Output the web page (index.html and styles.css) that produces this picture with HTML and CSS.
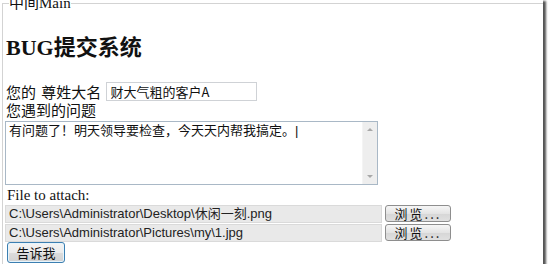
FILE: index.html
```html
<!DOCTYPE html>
<html lang="zh-CN">
<head>
    <meta charset="UTF-8">
    <title>BUG提交系统</title>
    <link rel="stylesheet" href="styles.css">
</head>
<body>
    <!-- screenshot frame with drop shadow -->
    <div class="shot">
        <form class="bug-form">
            <fieldset class="box">
                <legend class="box-title">中间Main</legend>

                <h2 class="title">BUG提交系统</h2>

                <!-- name row -->
                <div class="name-row">
                    <label class="label" for="name">您的 尊姓大名</label>
                    <input class="name-input" id="name" type="text" value="财大气粗的客户A" spellcheck="false">
                </div>

                <div class="label line">您遇到的问题</div>
                <div class="ta-box">
                    <textarea class="ta" spellcheck="false">有问题了！明天领导要检查，今天天内帮我搞定。|</textarea>
                    <!-- fake scrollbar like the old windows one -->
                    <div class="sbar">
                        <span class="arrow up"></span>
                        <span class="arrow down"></span>
                    </div>
                </div>

                <div class="file-label">File to attach:</div>
                <div class="file-row">
                    <div class="file-path">C:\Users\Administrator\Desktop\休闲一刻.png</div>
                    <button type="button" class="browse">浏览...</button>
                </div>
                <div class="file-row">
                    <div class="file-path">C:\Users\Administrator\Pictures\my\1.jpg</div>
                    <button type="button" class="browse">浏览...</button>
                </div>

                <button type="button" class="submit">告诉我</button>
            </fieldset>
        </form>
    </div>
</body>
</html>
```

FILE: styles.css
```css
/* page */
body {
    margin: 0;
    background: #fff;
    font-family: "Liberation Serif", "Noto Sans CJK SC", serif;
    font-size: 15px;
    color: #111;
}

/* the screenshot itself, with the shadow on right and bottom */
.shot {
    width: 543px;
    height: 264px;
    overflow: hidden;
    background: #fff;
    box-shadow: 2px 2px 2px 1px #555;
}

.bug-form {
    margin: 0;
}

/* fieldset is wider and taller than the shot, only left + top border show */
.box {
    margin: -4px 0 0 2px;
    padding: 0 0 0 2px;
    width: 600px;
    height: 320px;
    border: 1px solid #d3d3d3;
    min-width: 0;
}

.box-title {
    margin-left: 4px;
    padding: 0;
    height: 15px;
    line-height: 15px;
    font-size: 15px;
}

.title {
    margin: 24px 0 0 1px;
    height: 25px;
    font-size: 22px;
    line-height: 25px;
    font-weight: bold;
}

.name-row {
    display: flex;
    align-items: center;
    gap: 5px;
    height: 19px;
    margin-top: 22px;
}

.label {
    font-family: "Noto Sans CJK SC", sans-serif;
    font-size: 15px;
    line-height: 19px;
    word-spacing: 2px;
    padding-left: 1px;
}

.line {
    height: 18px;
    line-height: 18px;
}

.name-input {
    box-sizing: border-box;
    width: 151px;
    height: 19px;
    margin: 0;
    padding: 0 3px;
    border: 1px solid #cfd2d6;
    font-family: "Noto Sans CJK SC", sans-serif;
    font-size: 13px;
    color: #111;
    background: #fff;
}

/* textarea with a drawn scrollbar */
.ta-box {
    display: flex;
    box-sizing: border-box;
    width: 373px;
    height: 64px;
    margin-top: 2px;
    border: 1px solid #a9b8c6;
    background: #fff;
}

.ta {
    flex: 1;
    margin: 0;
    padding: 1px 3px;
    border: none;
    resize: none;
    outline: none;
    overflow: hidden;
    font-family: "Liberation Sans", "Noto Sans CJK SC", sans-serif;
    font-size: 13px;
    line-height: 16px;
    color: #111;
    caret-color: transparent;
}

.sbar {
    display: flex;
    flex-direction: column;
    justify-content: space-between;
    align-items: center;
    width: 14px;
    padding: 6px 0;
    background: #eeeeee;
    border-left: 1px solid #f4f4f4;
}

.arrow {
    width: 0;
    height: 0;
    border-left: 3px solid transparent;
    border-right: 3px solid transparent;
}

.arrow.up {
    border-bottom: 3px solid #a8a8a8;
}

.arrow.down {
    border-top: 3px solid #a8a8a8;
}

.file-label {
    margin-top: 1px;
    padding-left: 2px;
    height: 18px;
    line-height: 18px;
    font-size: 15px;
}

.file-row {
    display: flex;
    align-items: center;
    gap: 3px;
    height: 19px;
}

.file-path {
    box-sizing: border-box;
    width: 377px;
    height: 18px;
    padding: 0 3px;
    border: 1px solid #dadada;
    background: #e9e9e9;
    font-family: "Liberation Sans", "Noto Sans CJK SC", sans-serif;
    font-size: 13px;
    line-height: 16px;
    color: #222;
    white-space: nowrap;
}

.browse {
    box-sizing: border-box;
    width: 66px;
    height: 17px;
    margin: 0;
    padding: 0;
    border: 1px solid #8e8e8e;
    border-radius: 3px;
    background: linear-gradient(#f6f6f6, #e4e4e4 50%, #d6d6d6 51%, #e0e0e0);
    font-family: "Noto Sans CJK SC", sans-serif;
    font-size: 13px;
    line-height: 14px;
    letter-spacing: 2px;
    color: #111;
}

.submit {
    display: block;
    box-sizing: border-box;
    width: 58px;
    height: 21px;
    margin: 0 0 0 2px;
    padding: 0;
    border: 1px solid #3c7fb1;
    border-radius: 3px;
    background: linear-gradient(#f4f4f4, #ebebeb 50%, #dcdcdc 51%, #d2d2d2);
    box-shadow: inset 0 0 0 1px #e6f4fc;
    font-family: "Noto Sans CJK SC", sans-serif;
    font-size: 13px;
    line-height: 17px;
    color: #111;
}
```
